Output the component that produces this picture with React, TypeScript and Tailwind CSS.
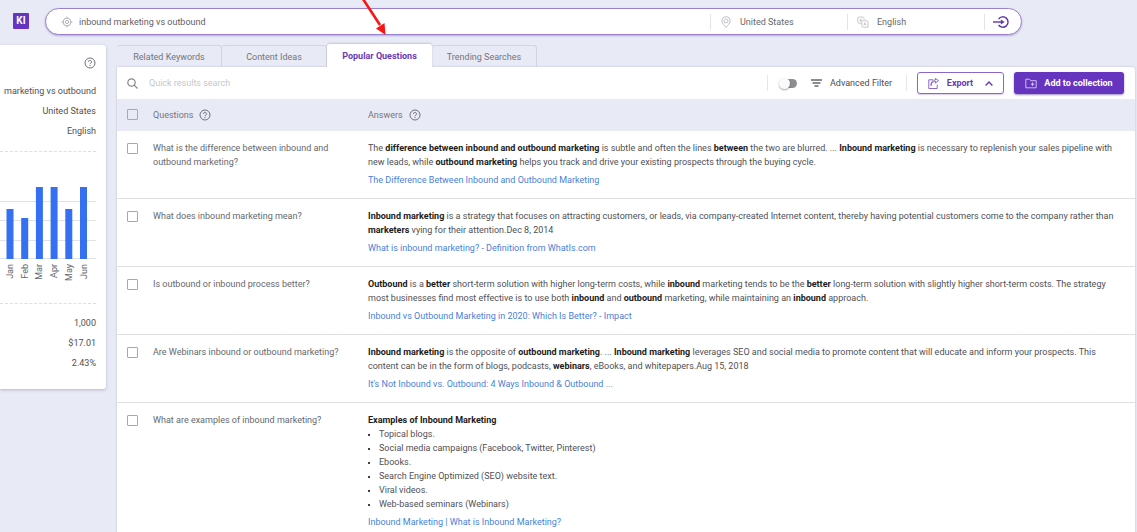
import React, { useState } from "react";

type Row = {
  question: string;
  answer: React.ReactNode;
  link: string;
};

const rows: Row[] = [
  {
    question: "What is the difference between inbound and outbound marketing?",
    answer: (
      <p>
        The <B>difference between inbound and outbound marketing</B> is subtle and often the lines <B>between</B> the
        two are blurred. ... <B>Inbound marketing</B> is necessary to replenish your sales pipeline with new leads,
        while <B>outbound marketing</B> helps you track and drive your existing prospects through the buying cycle.
      </p>
    ),
    link: "The Difference Between Inbound and Outbound Marketing",
  },
  {
    question: "What does inbound marketing mean?",
    answer: (
      <p>
        <B>Inbound marketing</B> is a strategy that focuses on attracting customers, or leads, via company-created
        Internet content, thereby having potential customers come to the company rather than <B>marketers</B> vying for
        their attention.Dec 8, 2014
      </p>
    ),
    link: "What is inbound marketing? - Definition from WhatIs.com",
  },
  {
    question: "Is outbound or inbound process better?",
    answer: (
      <p>
        <B>Outbound</B> is a <B>better</B> short-term solution with higher long-term costs, while <B>inbound</B>{" "}
        marketing tends to be the <B>better</B> long-term solution with slightly higher short-term costs. The strategy
        most businesses find most effective is to use both <B>inbound</B> and <B>outbound</B> marketing, while
        maintaining an <B>inbound</B> approach.
      </p>
    ),
    link: "Inbound vs Outbound Marketing in 2020: Which Is Better? - Impact",
  },
  {
    question: "Are Webinars inbound or outbound marketing?",
    answer: (
      <p>
        <B>Inbound marketing</B> is the opposite of <B>outbound marketing</B>. ... <B>Inbound marketing</B> leverages
        SEO and social media to promote content that will educate and inform your prospects. This content can be in the
        form of blogs, podcasts, <B>webinars</B>, eBooks, and whitepapers.Aug 15, 2018
      </p>
    ),
    link: "It's Not Inbound vs. Outbound: 4 Ways Inbound & Outbound ...",
  },
  {
    question: "What are examples of inbound marketing?",
    answer: (
      <>
        <B>Examples of Inbound Marketing</B>
        <ul className="list-disc pl-[11px] marker:text-[8px] marker:text-black">
          <li>Topical blogs.</li>
          <li>Social media campaigns (Facebook, Twitter, Pinterest)</li>
          <li>Ebooks.</li>
          <li>Search Engine Optimized (SEO) website text.</li>
          <li>Viral videos.</li>
          <li>Web-based seminars (Webinars)</li>
        </ul>
      </>
    ),
    link: "Inbound Marketing | What is Inbound Marketing?",
  },
];

const months = [
  { name: "Jan", value: 50 },
  { name: "Feb", value: 41 },
  { name: "Mar", value: 72 },
  { name: "Apr", value: 72 },
  { name: "May", value: 50 },
  { name: "Jun", value: 72 },
];

const tabs = ["Related Keywords", "Content Ideas", "Popular Questions", "Trending Searches"];

function B({ children }: { children: React.ReactNode }) {
  return <b className="font-bold text-[#1c1c1c]">{children}</b>;
}

function HelpIcon() {
  return (
    <svg viewBox="0 0 12 12" className="size-3 shrink-0" fill="none" stroke="#6f7078" aria-hidden="true">
      <circle cx="6" cy="6" r="5" strokeWidth="1" />
      <path d="M4.5 4.9a1.5 1.5 0 1 1 2.3 1.2c-.5.3-.8.5-.8 1.1" strokeWidth="1" />
      <path d="M6 8v1" strokeWidth="1" />
    </svg>
  );
}

function TargetIcon() {
  return (
    <svg viewBox="0 0 12 12" className="size-3 shrink-0" fill="none" stroke="#9c9da3" strokeWidth="0.8" aria-hidden="true">
      <circle cx="6" cy="6" r="3.9" />
      <circle cx="6" cy="6" r="1.6" />
      <path d="M6 .6v1.5M6 9.9v1.5M.6 6h1.5M9.9 6h1.5" />
    </svg>
  );
}

function PinIcon() {
  return (
    <svg viewBox="0 0 12 12" className="size-3 shrink-0" fill="none" stroke="#b0b1b7" strokeWidth="0.8" aria-hidden="true">
      <path d="M6 11.3C4.800 9.800 1.900 7.700 1.900 4.900a4.100 4.100 0 0 1 8.200 0C10.100 7.700 7.200 9.800 6 11.300Z" />
      <circle cx="6" cy="4.900" r="2" />
    </svg>
  );
}

function LanguageIcon() {
  return (
    <svg viewBox="0 0 12 12" className="size-3 shrink-0" fill="none" stroke="#b8b9bf" strokeWidth="0.8" aria-hidden="true">
      <path d="M4.400 7.300H2.600Q.8 7.300.8 5.500V2.800Q.8 1 2.600 1h2.700q1.800 0 1.800 1.800v1" />
      <path d="M6.500 4.700h2.700q1.800 0 1.800 1.800v4.700H6.500q-1.800 0-1.800-1.800V6.500q0-1.800 1.800-1.800Z" />
      <path d="m2.800 5.600 1.100-2.800.9 2.300M3.200 4.800h1.200M6.800 9.300l1.100-2.800L9 9.300M7.200 8.500h1.400" strokeWidth="0.7" />
    </svg>
  );
}

function GoIcon() {
  return (
    <svg viewBox="0 0 16 12" className="h-3 w-4" fill="none" stroke="#5e35b1" strokeWidth="1.4" aria-hidden="true">
      <path d="M5.600 3A5.200 5.200 0 1 1 5.600 9" />
      <path d="M0 6h9" />
      <path d="m7.800 3.500 3.800 2.500-3.800 2.500Z" fill="#5e35b1" strokeWidth="0" />
    </svg>
  );
}

function Checkbox({ label }: { label: string }) {
  return (
    <input
      type="checkbox"
      aria-label={label}
      className="block size-[11px] appearance-none rounded-[1px] border border-[#a8a8ae] bg-transparent checked:bg-[#673ab7]"
    />
  );
}

function SearchBar() {
  return (
    <form
      onSubmit={(e) => e.preventDefault()}
      className="flex h-[27px] w-[977px] min-w-0 items-center rounded-full border border-[#9a80d0] bg-white pr-3 pl-[15px] shadow-[0_1px_2px_rgba(60,40,120,0.3)]"
    >
      <label className="flex min-w-0 flex-1 items-center gap-1.5">
        <TargetIcon />
        <input
          aria-label="Keyword"
          defaultValue="inbound marketing vs outbound"
          className="h-4 w-full min-w-0 bg-transparent text-[#5f6066] outline-none"
        />
      </label>
      <label className="flex h-4 w-[137px] items-center gap-2 border-l border-[#e3e3e8] pl-[9px]">
        <PinIcon />
        <select aria-label="Location" className="appearance-none bg-transparent text-[#66676d] outline-none">
          <option>United States</option>
        </select>
      </label>
      <label className="flex h-4 w-[137px] items-center gap-2 border-l border-[#e3e3e8] pl-[9px]">
        <LanguageIcon />
        <select aria-label="Language" className="appearance-none bg-transparent text-[#66676d] outline-none">
          <option>English</option>
        </select>
      </label>
      <button type="submit" aria-label="Search" className="flex h-4 items-center border-l border-[#e3e3e8] pl-2">
        <GoIcon />
      </button>
    </form>
  );
}

function Sidebar() {
  return (
    <aside className="w-[106px] shrink-0 rounded-r-[3px] bg-white pr-[10px] pb-4 text-right shadow-[0_1px_3px_rgba(60,60,110,0.3)]">
      <div className="flex justify-end pt-3">
        <HelpIcon />
      </div>
      <div className="mt-3 pb-[10px] leading-5 whitespace-nowrap">
        <p>marketing vs outbound</p>
        <p>United States</p>
        <p>English</p>
      </div>
      <div className="border-y border-dashed border-[#dedee3] pt-[35px] pb-5">
        <svg viewBox="0 0 96 96" className="block h-24 w-full" role="img" aria-label="Monthly search volume">
          {[14, 33, 53, 71].map((y) => (
            <path key={y} d={`M0 ${y}.5H96`} stroke="#e2e2e6" />
          ))}
          {months.map((m, i) => (
            <g key={m.name}>
              <rect x={6.5 + i * 14.7} y={72 - m.value} width="7" height={m.value} fill="#3570f2" />
              <text
                transform={`translate(${13 + i * 14.7} 77) rotate(-90)`}
                textAnchor="end"
                className="fill-[#66676d] text-[9px]"
              >
                {m.name}
              </text>
            </g>
          ))}
        </svg>
      </div>
      <div className="pt-[9px] leading-5">
        <p>1,000</p>
        <p>$17.01</p>
        <p>2.43%</p>
      </div>
    </aside>
  );
}

function Tabs() {
  const [active, setActive] = useState("Popular Questions");
  return (
    <div role="tablist" className="flex h-[23px] items-end">
      {tabs.map((tab) => (
        <button
          key={tab}
          role="tab"
          aria-selected={tab === active}
          onClick={() => setActive(tab)}
          className={
            tab === active
              ? "h-[23px] w-[105px] rounded-t-[3px] bg-white pt-px font-bold text-[#673ab7] shadow-[0_-1px_2px_rgba(60,60,110,0.2)]"
              : "h-[22px] w-[105px] rounded-t-[3px] border-t border-r border-[#d3d4e2] pt-px text-[#74757e]"
          }
        >
          {tab}
        </button>
      ))}
    </div>
  );
}

function Toolbar() {
  return (
    <div className="flex h-8 items-center pr-[11px] pl-[10px]">
      <label className="flex min-w-0 flex-1 items-center gap-[11px]">
        <svg viewBox="0 0 11 11" className="size-[11px] shrink-0" fill="none" stroke="#85868c" strokeWidth="1.2" aria-hidden="true">
          <circle cx="4.5" cy="4.5" r="3.7" />
          <path d="m7.200 7.200 3.300 3.300" />
        </svg>
        <input
          aria-label="Quick results search"
          placeholder="Quick results search"
          className="h-4 w-full bg-transparent outline-none placeholder:text-[#c6c7cd]"
        />
      </label>
      <div className="flex h-4 items-center border-x border-[#e6e6ea] pr-[14px] pl-3">
        <label className="flex items-center gap-2">
          <input
            type="checkbox"
            role="switch"
            aria-label="Advanced Filter"
            className="relative mr-1.5 h-[9px] w-[17px] appearance-none rounded-full bg-[#8e8e92] before:absolute before:-top-px before:-left-px before:size-[11px] before:rounded-full before:bg-[#fafafa] before:shadow-[0_1px_2px_rgba(0,0,0,0.35)]"
          />
          <svg viewBox="0 0 11 8" className="h-2 w-[11px]" stroke="#66676c" strokeWidth="1.3" aria-hidden="true">
            <path d="M0 1h11M1.500 4h8M3.500 7h4" />
          </svg>
          <span className="text-[#4c4d52]">Advanced Filter</span>
        </label>
      </div>
      <button className="ml-[10px] flex h-[22px] w-[87px] items-center justify-center gap-2 rounded-[3px] border border-[#8a67cb] font-bold text-[#673ab7] shadow-[0_1px_1px_rgba(103,58,183,0.25)]">
        <svg viewBox="0 0 11 11" className="size-[11px]" fill="none" stroke="#7e57c2" strokeWidth="0.9" aria-hidden="true">
          <path d="M5 1.800H.8v8.700h8.400V6.700" />
          <path d="M3 7.500C3.300 4.800 5 3.500 7.500 3.400V5.100l3-2.500L7.500.4v1.500C4.500 2 2.900 4 3 7.500Z" />
        </svg>
        Export
        <svg viewBox="0 0 8 5" className="ml-1 h-[5px] w-2" fill="none" stroke="#673ab7" strokeWidth="1.4" aria-hidden="true">
          <path d="m.6 4.400 3.400-3.400 3.400 3.400" />
        </svg>
      </button>
      <button className="ml-[10px] flex h-[22px] w-[110px] items-center justify-center gap-[7px] rounded-[3px] bg-[#6535bf] font-bold text-white shadow-[0_1px_2px_rgba(60,30,130,0.5)]">
        <svg viewBox="0 0 12 11" className="h-[11px] w-3" fill="none" stroke="#d9cdf2" strokeWidth="0.9" aria-hidden="true">
          <path d="M.8 9.800V1.200h3.700l1.200 1.500h5.500v7.100Z" />
          <path d="M7.500 4.600v3.200M5.900 6.200h3.200" strokeWidth="1.1" />
        </svg>
        Add to collection
      </button>
    </div>
  );
}

function Results() {
  return (
    <table className="w-full table-fixed border-collapse text-left leading-[14px]">
      <colgroup>
        <col className="w-9" />
        <col className="w-[215px]" />
        <col />
      </colgroup>
      <thead>
        <tr className="h-8 bg-[#e8eaf6] text-[#74757e]">
          <th className="pb-px pl-[10px]">
            <Checkbox label="Select all questions" />
          </th>
          <th className="pb-px font-normal">
            <span className="flex items-center gap-1.5">
              Questions <HelpIcon />
            </span>
          </th>
          <th className="pb-px font-normal">
            <span className="flex items-center gap-1.5">
              Answers <HelpIcon />
            </span>
          </th>
        </tr>
      </thead>
      <tbody>
        {rows.map((row) => (
          <tr key={row.question} className="border-b border-[#e0e0e4] align-top">
            <td className="pt-3 pl-[10px]">
              <Checkbox label={row.question} />
            </td>
            <td className="pt-[10px] pr-5 text-[#66676d]">{row.question}</td>
            <td className="pt-[10px] pr-3 pb-[11px]">
              {row.answer}
              <a href="#" className="mt-1 block text-[#4a7fd6]">
                {row.link}
              </a>
            </td>
          </tr>
        ))}
      </tbody>
    </table>
  );
}

export default function App() {
  return (
    <div className="relative h-screen overflow-hidden bg-[#e8eaf6] font-['Roboto',sans-serif] text-[9px] leading-4 text-[#4f5056]">
      <header className="flex h-11 items-start gap-4 pt-2 pl-[13px]">
        <span className="mt-[5px] flex size-4 shrink-0 items-center justify-center rounded-[1px] bg-[#6535c0] text-[10px] font-bold text-white">
          KI
        </span>
        <SearchBar />
      </header>
      <div className="flex items-start gap-[11px] pr-0.5">
        <div className="pt-px">
          <Sidebar />
        </div>
        <main className="min-w-0 flex-1">
          <Tabs />
          <section className="rounded-tr-[3px] bg-white shadow-[0_0_2px_rgba(60,60,110,0.3)]">
            <Toolbar />
            <Results />
          </section>
        </main>
      </div>
      <svg viewBox="0 0 30 36" className="pointer-events-none absolute top-0 left-[358px] h-9 w-[30px]" aria-hidden="true">
        <path d="M5 -1 22 25" stroke="#fb1414" strokeWidth="2.6" />
        <path d="m27.500 35-9.500-6.500 8.500-5.500Z" fill="#fb1414" />
      </svg>
    </div>
  );
}
